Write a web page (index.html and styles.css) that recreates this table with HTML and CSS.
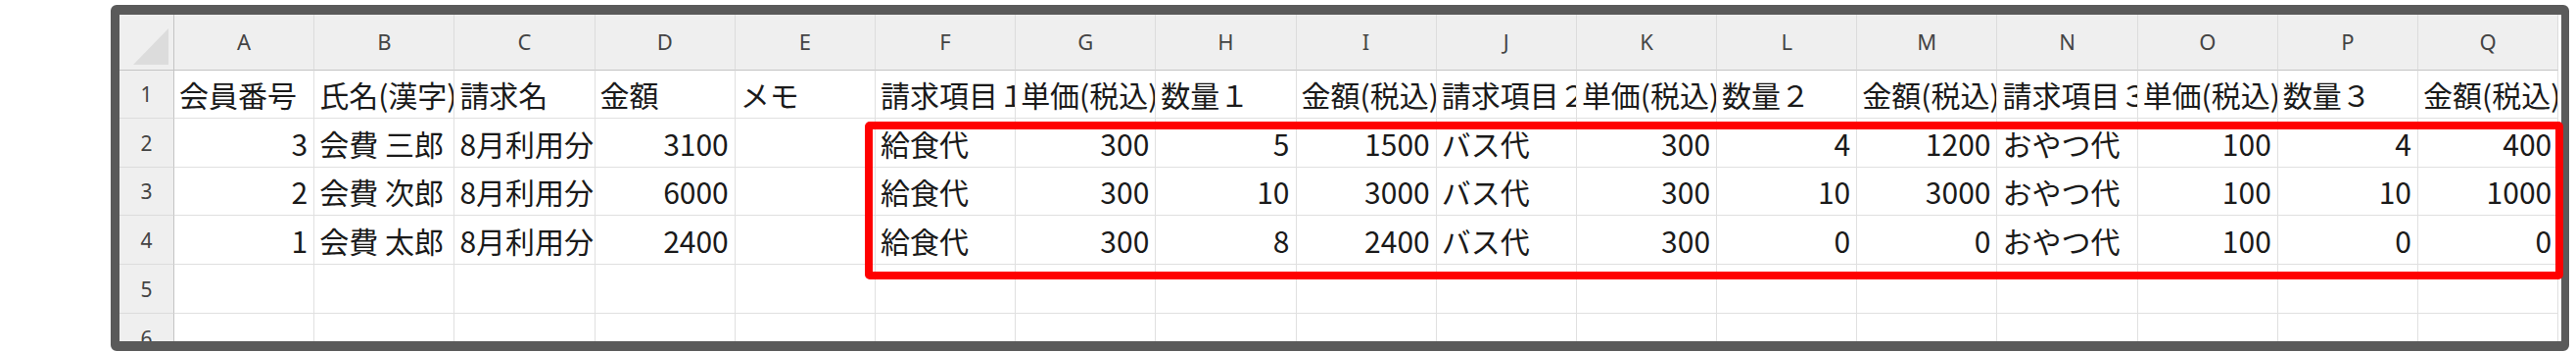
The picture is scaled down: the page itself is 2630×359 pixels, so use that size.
FILE: index.html
```html
<!DOCTYPE html>
<html lang="ja">
<head>
<meta charset="utf-8">
<title>請求データ</title>
<link rel="stylesheet" href="styles.css">
</head>
<body>
<div class="stage">
  <div class="frame">
    <div class="sheet">
      <div class="corner"><div class="tri"></div></div>
      <div class="ch">A</div><div class="ch">B</div><div class="ch">C</div><div class="ch">D</div><div class="ch">E</div><div class="ch">F</div><div class="ch">G</div><div class="ch">H</div><div class="ch">I</div><div class="ch">J</div><div class="ch">K</div><div class="ch">L</div><div class="ch">M</div><div class="ch">N</div><div class="ch">O</div><div class="ch">P</div><div class="ch">Q</div>

      <div class="rh">1</div>
      <div class="c l first">会員番号</div><div class="c l">氏名(漢字)</div><div class="c l">請求名</div><div class="c l">金額</div><div class="c l">メモ</div><div class="c l">請求項目１</div><div class="c l">単価(税込)</div><div class="c l">数量１</div><div class="c l">金額(税込)</div><div class="c l">請求項目２</div><div class="c l">単価(税込)</div><div class="c l">数量２</div><div class="c l">金額(税込)</div><div class="c l">請求項目３</div><div class="c l">単価(税込)</div><div class="c l">数量３</div><div class="c l">金額(税込)</div>

      <div class="rh">2</div>
      <div class="c r">3</div><div class="c l">会費 三郎</div><div class="c l">8月利用分</div><div class="c r">3100</div><div class="c"></div><div class="c l">給食代</div><div class="c r">300</div><div class="c r">5</div><div class="c r">1500</div><div class="c l">バス代</div><div class="c r">300</div><div class="c r">4</div><div class="c r">1200</div><div class="c l">おやつ代</div><div class="c r">100</div><div class="c r">4</div><div class="c r">400</div>

      <div class="rh">3</div>
      <div class="c r">2</div><div class="c l">会費 次郎</div><div class="c l">8月利用分</div><div class="c r">6000</div><div class="c"></div><div class="c l">給食代</div><div class="c r">300</div><div class="c r">10</div><div class="c r">3000</div><div class="c l">バス代</div><div class="c r">300</div><div class="c r">10</div><div class="c r">3000</div><div class="c l">おやつ代</div><div class="c r">100</div><div class="c r">10</div><div class="c r">1000</div>

      <div class="rh">4</div>
      <div class="c r">1</div><div class="c l">会費 太郎</div><div class="c l">8月利用分</div><div class="c r">2400</div><div class="c"></div><div class="c l">給食代</div><div class="c r">300</div><div class="c r">8</div><div class="c r">2400</div><div class="c l">バス代</div><div class="c r">300</div><div class="c r">0</div><div class="c r">0</div><div class="c l">おやつ代</div><div class="c r">100</div><div class="c r">0</div><div class="c r">0</div>

      <div class="rh">5</div>
      <div class="c"></div><div class="c"></div><div class="c"></div><div class="c"></div><div class="c"></div><div class="c"></div><div class="c"></div><div class="c"></div><div class="c"></div><div class="c"></div><div class="c"></div><div class="c"></div><div class="c"></div><div class="c"></div><div class="c"></div><div class="c"></div><div class="c"></div>

      <div class="rh">6</div>
      <div class="c"></div><div class="c"></div><div class="c"></div><div class="c"></div><div class="c"></div><div class="c"></div><div class="c"></div><div class="c"></div><div class="c"></div><div class="c"></div><div class="c"></div><div class="c"></div><div class="c"></div><div class="c"></div><div class="c"></div><div class="c"></div><div class="c"></div>
    </div>
  </div>
  <div class="highlight"></div>
</div>
</body>
</html>
```
FILE: styles.css
```css
html, body {
  margin: 0;
  padding: 0;
  background: #ffffff;
}

.stage {
  position: relative;
  width: 2630px;
  height: 359px;
}

.frame {
  box-sizing: border-box;
  margin: 5px 0 0 113px;
  width: 2510px;
  height: 353px;
  border-style: solid;
  border-color: #5a5a5a;
  border-width: 10px 8px 10px 9px;
  border-radius: 6px;
  overflow: hidden;
  background: #ffffff;
}

.sheet {
  display: grid;
  grid-template-columns: 56px repeat(17, 143.2px);
  grid-template-rows: 57px 49px 50px 49px 50px 50px 50px;
  font-family: "Noto Sans CJK JP", "Noto Sans", sans-serif;
}

.corner {
  box-sizing: border-box;
  background: #efefef;
  border-right: 1px solid #c4c4c4;
  border-bottom: 1px solid #c4c4c4;
  padding: 14px 5px 5px 14px;
}

.tri {
  width: 100%;
  height: 100%;
  background: #dcdcdc;
  clip-path: polygon(100% 0, 100% 100%, 0 100%);
}

.ch {
  box-sizing: border-box;
  background: #efefef;
  border-right: 1px solid #dcdcdc;
  border-bottom: 1px solid #c4c4c4;
  display: flex;
  align-items: center;
  justify-content: center;
  font-family: "Noto Sans", "Noto Sans CJK JP", sans-serif;
  font-size: 22px;
  color: #444444;
  padding-bottom: 2px;
}

.rh {
  box-sizing: border-box;
  background: #efefef;
  border-right: 1px solid #c4c4c4;
  border-bottom: 1px solid #dcdcdc;
  display: flex;
  align-items: center;
  justify-content: center;
  font-family: "Noto Sans", "Noto Sans CJK JP", sans-serif;
  font-size: 21px;
  color: #444444;
}

.c {
  box-sizing: border-box;
  border-right: 1px solid #e0e0e0;
  border-bottom: 1px solid #e0e0e0;
  display: flex;
  align-items: center;
  overflow: hidden;
  white-space: nowrap;
  font-size: 30px;
  line-height: 1;
  color: #1a1a1a;
}

.c.l {
  justify-content: flex-start;
  padding-left: 5px;
}

.c.r {
  justify-content: flex-end;
  padding-right: 6px;
}

.highlight {
  position: absolute;
  left: 883px;
  top: 119px;
  width: 1734px;
  height: 161px;
  box-sizing: border-box;
  border: 8px solid #ff0000;
  border-radius: 5px;
}
```
